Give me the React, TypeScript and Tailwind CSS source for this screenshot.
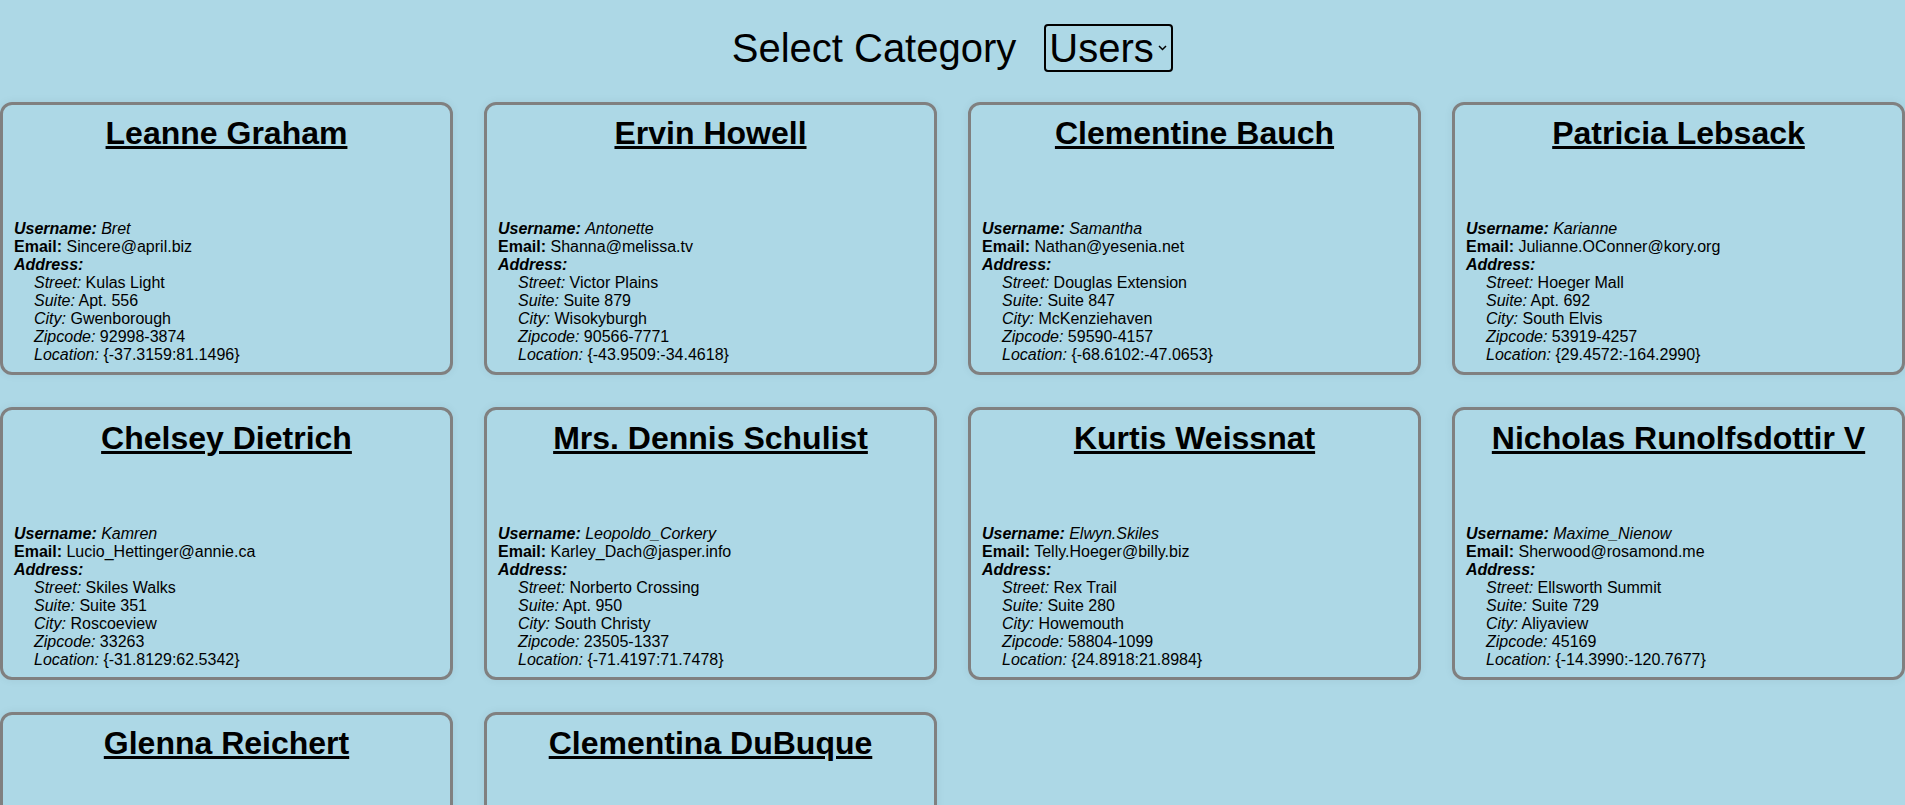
import React, { useState } from 'react';

interface User {
  name: string;
  username: string;
  email: string;
  street: string;
  suite: string;
  city: string;
  zipcode: string;
  lat: string;
  lng: string;
}

const users: User[] = [
  { name: 'Leanne Graham', username: 'Bret', email: 'Sincere@april.biz', street: 'Kulas Light', suite: 'Apt. 556', city: 'Gwenborough', zipcode: '92998-3874', lat: '-37.3159', lng: '81.1496' },
  { name: 'Ervin Howell', username: 'Antonette', email: 'Shanna@melissa.tv', street: 'Victor Plains', suite: 'Suite 879', city: 'Wisokyburgh', zipcode: '90566-7771', lat: '-43.9509', lng: '-34.4618' },
  { name: 'Clementine Bauch', username: 'Samantha', email: 'Nathan@yesenia.net', street: 'Douglas Extension', suite: 'Suite 847', city: 'McKenziehaven', zipcode: '59590-4157', lat: '-68.6102', lng: '-47.0653' },
  { name: 'Patricia Lebsack', username: 'Karianne', email: 'Julianne.OConner@kory.org', street: 'Hoeger Mall', suite: 'Apt. 692', city: 'South Elvis', zipcode: '53919-4257', lat: '29.4572', lng: '-164.2990' },
  { name: 'Chelsey Dietrich', username: 'Kamren', email: 'Lucio_Hettinger@annie.ca', street: 'Skiles Walks', suite: 'Suite 351', city: 'Roscoeview', zipcode: '33263', lat: '-31.8129', lng: '62.5342' },
  { name: 'Mrs. Dennis Schulist', username: 'Leopoldo_Corkery', email: 'Karley_Dach@jasper.info', street: 'Norberto Crossing', suite: 'Apt. 950', city: 'South Christy', zipcode: '23505-1337', lat: '-71.4197', lng: '71.7478' },
  { name: 'Kurtis Weissnat', username: 'Elwyn.Skiles', email: 'Telly.Hoeger@billy.biz', street: 'Rex Trail', suite: 'Suite 280', city: 'Howemouth', zipcode: '58804-1099', lat: '24.8918', lng: '21.8984' },
  { name: 'Nicholas Runolfsdottir V', username: 'Maxime_Nienow', email: 'Sherwood@rosamond.me', street: 'Ellsworth Summit', suite: 'Suite 729', city: 'Aliyaview', zipcode: '45169', lat: '-14.3990', lng: '-120.7677' },
  { name: 'Glenna Reichert', username: 'Delphine', email: 'Chaim_McDermott@dana.io', street: 'Dayna Park', suite: 'Suite 449', city: 'Bartholomebury', zipcode: '76495-3109', lat: '24.6463', lng: '-168.8889' },
  { name: 'Clementina DuBuque', username: 'Moriah.Stanton', email: 'Rey.Padberg@karina.biz', street: 'Kattie Turnpike', suite: 'Suite 198', city: 'Lebsackbury', zipcode: '31428-2261', lat: '-38.2386', lng: '57.2232' },
];

function AddressLine({ label, value }: { label: string; value: string }) {
  return (
    <div className="pl-5">
      <i>{label}:</i> {value}
    </div>
  );
}

function UserCard({ user }: { user: User }) {
  return (
    <div className="h-[273px] rounded-xl border-[3px] border-[#808080] px-[11px] pt-[10px] shadow-[0_0_10px_rgba(0,0,0,0.06)]">
      <h1 className="text-center text-[32px] font-bold leading-[37px] underline underline-offset-[2px] decoration-[3px]">
        {user.name}
      </h1>
      <div className="mt-[68px] text-base leading-[18px]">
        <div>
          <b>
            <i>Username:</i>
          </b>{' '}
          <i>{user.username}</i>
        </div>
        <div>
          <b>Email:</b> {user.email}
        </div>
        <div>
          <b>
            <i>Address:</i>
          </b>
        </div>
        <AddressLine label="Street" value={user.street} />
        <AddressLine label="Suite" value={user.suite} />
        <AddressLine label="City" value={user.city} />
        <AddressLine label="Zipcode" value={user.zipcode} />
        <AddressLine label="Location" value={`{${user.lat}:${user.lng}}`} />
      </div>
    </div>
  );
}

export default function App() {
  const [category, setCategory] = useState('users');

  return (
    <div className="min-h-screen bg-[#add8e6] pb-8 text-black font-['Liberation_Sans',Arial,sans-serif]">
      <div className="flex items-center justify-center gap-[28px] pt-6 pb-[30px]">
        <span className="text-[40px] leading-[46px]">Select Category</span>
        <label className="flex h-12 w-[129px] items-center rounded-[4px] border-2 border-black pl-[3px]">
          <select
            value={category}
            onChange={e => setCategory(e.target.value)}
            className="w-[108px] appearance-none bg-transparent text-[40px] leading-[44px] outline-none"
          >
            <option value="users">Users</option>
            <option value="posts">Posts</option>
            <option value="todos">Todos</option>
          </select>
          <svg className="ml-px h-[6px] w-[9px]" viewBox="0 0 9 6" fill="none" stroke="#000" strokeWidth={1.5}>
            <path d="M1 1l3.5 3.5L8 1" />
          </svg>
        </label>
      </div>

      <div className="grid grid-cols-4 gap-x-[31px] gap-y-[32px]">
        {users.map(user => (
          <UserCard key={user.name} user={user} />
        ))}
      </div>
    </div>
  );
}
